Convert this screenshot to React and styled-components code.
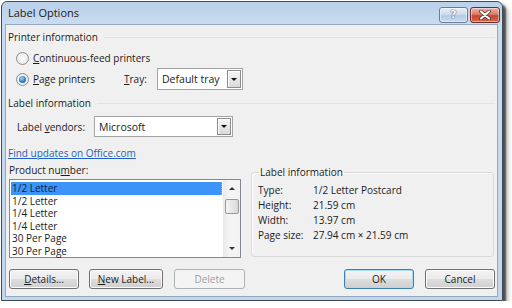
import React from 'react';
import styled, {createGlobalStyle} from 'styled-components';

const GlobalStyle = createGlobalStyle`
  html, body {
    margin: 0;
    padding: 0;
    background: #fff;
  }
  body {
    font-family: "Open Sans", "Noto Sans", sans-serif;
    font-size: 10px;
    color: #1b1b1b;
  }
  * {
    box-sizing: border-box;
  }
`;

const Window = styled.div`
  margin: 1px 0 0 1px;
  width: 502px;
  height: 300px;
  border: 1px solid #414b57;
  border-radius: 6px 6px 0 0;
  background: linear-gradient(180deg, #b9d0ea 0px, #cadcef 22px, #c2d6ec 100%);
  padding: 0 4px 3px 3px;
  display: flex;
  flex-direction: column;
  box-shadow: 3px 3px 2px rgba(0, 0, 0, 0.6), 5px 5px 5px rgba(0, 0, 0, 0.25);
`;

const TitleBar = styled.div`
  height: 22px;
  margin-right: -2px;
  display: flex;
  align-items: center;
  padding-left: 3px;
`;

const Title = styled.div`
  flex: 1;
  font-size: 11px;
  color: #1a1a1a;
  margin-top: -1px;
`;

const CaptionButton = styled.div`
  width: ${p => p.$w}px;
  height: 16px;
  margin-left: ${p => p.$gap}px;
  margin-top: 3px;
  border: 1px solid ${p => (p.$close ? '#6e2e25' : '#6a7d95')};
  border-radius: 3px;
  background: ${p =>
    p.$close
      ? 'linear-gradient(180deg, #ecb2a6 0%, #dc7e6b 45%, #c8462f 55%, #d4674f 100%)'
      : 'linear-gradient(180deg, #e6eff8 0%, #ccdcee 45%, #b5cbe4 55%, #c8daee 100%)'};
  box-shadow: inset 0 0 0 1px rgba(255, 255, 255, 0.45);
  display: flex;
  align-items: center;
  justify-content: center;
  color: #fff;
  font-family: "DejaVu Sans", sans-serif;
  font-weight: bold;
  font-size: 11px;
  text-shadow: 0 0 1px #3c4654, 0 0 1px #3c4654;
`;

const Body = styled.div`
  flex: 1;
  background: #f0f0f0;
  border: 1px solid #94a9c1;
  padding: 5px 2px 0 3px;
  display: flex;
  flex-direction: column;
`;

const SectionHeader = styled.div`
  display: flex;
  align-items: center;
  gap: 6px;
  height: 14px;
  margin-top: ${p => p.$top}px;
  margin-left: -1px;
  &::after {
    content: '';
    flex: 1;
    height: 1px;
    background: #dde4e9;
  }
`;

const Row = styled.div`
  display: flex;
  align-items: center;
  height: ${p => p.$h}px;
  margin-top: ${p => p.$top}px;
  padding-left: ${p => p.$indent || 0}px;
`;

const RadioLabel = styled.label`
  display: flex;
  align-items: center;
  gap: 4px;
  width: ${p => p.$w || 'auto'};
`;

const RadioDot = styled.span`
  width: 13px;
  height: 13px;
  border-radius: 50%;
  border: 1px solid #8a8c8e;
  background: radial-gradient(circle at 50% 50%, #fbfbfb 0%, #e4e4e4 100%);
  display: flex;
  align-items: center;
  justify-content: center;
  &::after {
    content: '';
    display: ${p => (p.$on ? 'block' : 'none')};
    width: 7px;
    height: 7px;
    border-radius: 50%;
    background: radial-gradient(circle at 40% 35%, #a9d6f7 0%, #3a86c4 50%, #1c4f80 100%);
  }
`;

const FieldLabel = styled.span`
  width: ${p => p.$w}px;
`;

const Combo = styled.div`
  width: ${p => p.$w}px;
  height: ${p => p.$h}px;
  border: 1px solid #a3a3a3;
  background: #fff;
  display: flex;
  align-items: center;
  padding: 1px 1px 1px 4px;
`;

const ComboText = styled.span`
  flex: 1;
  font-size: 10.5px;
`;

const ComboButton = styled.span`
  width: 14px;
  height: 100%;
  border: 1px solid #8c8c8c;
  background: linear-gradient(180deg, #f4f4f4 0%, #dadada 100%);
  box-shadow: inset 1px 1px 0 #fff;
  display: flex;
  align-items: center;
  justify-content: center;
  &::after {
    content: '';
    border-left: 3px solid transparent;
    border-right: 3px solid transparent;
    border-top: 3px solid #111;
  }
`;

const Link = styled.a`
  display: block;
  height: 14px;
  margin-top: 9px;
  margin-left: -1px;
  color: #1f5fbf;
  text-decoration: underline;
`;

const Lower = styled.div`
  display: flex;
  gap: 10px;
  margin-top: 3px;
`;

const LeftCol = styled.div`
  width: 232px;
  display: flex;
  flex-direction: column;
`;

const ListBox = styled.div`
  margin-top: 2px;
  height: 79px;
  border: 1px solid #838790;
  background: #fff;
  display: flex;
  padding: 1px 0 0 1px;
`;

const Items = styled.div`
  flex: 1;
  padding-top: 1px;
  margin-right: 1px;
`;

const Item = styled.div`
  height: 12.5px;
  line-height: 12.5px;
  padding-left: 1px;
  color: ${p => (p.$sel ? '#0c1d45' : '#1b1b1b')};
  background: ${p => (p.$sel ? '#3c94f8' : 'transparent')};
  border-right: 1px dotted ${p => (p.$sel ? '#f0a548' : 'transparent')};
`;

const ScrollBar = styled.div`
  width: 17px;
  margin-top: -1px;
  background: linear-gradient(90deg, #e9e9e9 0%, #f5f5f5 40%, #f2f2f2 100%);
  display: flex;
  flex-direction: column;
  align-items: center;
`;

const ScrollArrow = styled.div`
  height: 17px;
  width: 100%;
  display: flex;
  align-items: center;
  justify-content: center;
  &::after {
    content: '';
    border-left: 3px solid transparent;
    border-right: 3px solid transparent;
    ${p => (p.$up ? 'border-bottom: 3px solid #333;' : 'border-top: 3px solid #333;')}
  }
`;

const Thumb = styled.div`
  width: 14px;
  height: 15px;
  margin-top: 2px;
  border: 1px solid #979797;
  border-radius: 2px;
  background: linear-gradient(90deg, #f5f5f5 0%, #e6e6e6 50%, #d9d9d9 100%);
`;

const Track = styled.div`
  flex: 1;
`;

const InfoBox = styled.fieldset`
  width: 243px;
  margin: 2px 0 0 0;
  padding: 3px 0 0 6px;
  height: 92px;
  border: 1px solid #d9d9d9;
  border-radius: 3px;
  box-shadow: inset 1px 1px 0 #fff;
  display: grid;
  grid-template-columns: 55px 1fr;
  grid-auto-rows: 15px;
  align-content: start;
  align-items: center;
`;

const Legend = styled.legend`
  padding: 0 1px;
  margin-left: 1px;
  color: #1b1b1b;
`;

const Buttons = styled.div`
  display: flex;
  margin-top: 11px;
  height: 20px;
`;

const Button = styled.button`
  width: ${p => p.$w}px;
  height: 20px;
  margin-left: ${p => p.$gap || 0}px;
  margin-right: ${p => (p.$push ? 'auto' : '0')};
  font-family: inherit;
  font-size: 10px;
  padding: 0;
  border-radius: 3px;
  border: 1px solid ${p => (p.$default ? '#3c7fb1' : p.disabled ? '#adb2b5' : '#707070')};
  color: ${p => (p.disabled ? '#a0a0a0' : '#1b1b1b')};
  background: ${p =>
    p.disabled
      ? '#f4f4f4'
      : 'linear-gradient(180deg, #f3f3f3 0%, #ebebeb 48%, #dddddd 52%, #cfcfcf 100%)'};
  box-shadow: inset 0 0 0 1px ${p => (p.$default ? '#a6dcf6' : p.disabled ? '#f4f4f4' : '#fcfcfc')};
`;

const products = ['1/2 Letter', '1/2 Letter', '1/4 Letter', '1/4 Letter', '30 Per Page', '30 Per Page'];

const info = [
  ['Type:', '1/2 Letter Postcard'],
  ['Height:', '21.59 cm'],
  ['Width:', '13.97 cm'],
  ['Page size:', '27.94 cm × 21.59 cm'],
];

export default function App() {
  return (
    <>
      <GlobalStyle/>
      <Window>
        <TitleBar>
          <Title>Label Options</Title>
          <CaptionButton $w={29} $gap={0}>?</CaptionButton>
          <CaptionButton $w={30} $gap={2} $close>
            <svg width="12" height="10" viewBox="0 0 12 10">
              <path d="M2 1.5 L10 8.5 M10 1.5 L2 8.5" stroke="#4a2a26" strokeWidth="3.6" strokeLinecap="round"/>
              <path d="M2 1.5 L10 8.5 M10 1.5 L2 8.5" stroke="#fff" strokeWidth="2.2" strokeLinecap="round"/>
            </svg>
          </CaptionButton>
        </TitleBar>
        <Body>
          <SectionHeader $top={0}>Printer information</SectionHeader>
          <Row $h={14} $top={7} $indent={7}>
            <RadioLabel>
              <RadioDot/>
              <span><u>C</u>ontinuous-feed printers</span>
            </RadioLabel>
          </Row>
          <Row $h={22} $top={3} $indent={7}>
            <RadioLabel $w="108px">
              <RadioDot $on/>
              <span><u>P</u>age printers</span>
            </RadioLabel>
            <FieldLabel $w={33}><u>T</u>ray:</FieldLabel>
            <Combo $w={86} $h={22}>
              <ComboText>Default tray</ComboText>
              <ComboButton/>
            </Combo>
          </Row>
          <SectionHeader $top={6}>Label information</SectionHeader>
          <Row $h={21} $top={6} $indent={8}>
            <FieldLabel $w={77}>Label <u>v</u>endors:</FieldLabel>
            <Combo $w={139} $h={21}>
              <ComboText>Microsoft</ComboText>
              <ComboButton/>
            </Combo>
          </Row>
          <Link>Find updates on Office.com</Link>
          <Lower>
            <LeftCol>
              <FieldLabel $w={232}>Product nu<u>m</u>ber:</FieldLabel>
              <ListBox>
                <Items>
                  {products.map((p, i) => (
                    <Item key={i} $sel={i === 0}>{p}</Item>
                  ))}
                </Items>
                <ScrollBar>
                  <ScrollArrow $up/>
                  <Thumb/>
                  <Track/>
                  <ScrollArrow/>
                </ScrollBar>
              </ListBox>
            </LeftCol>
            <InfoBox>
              <Legend>Label information</Legend>
              {info.map(([k, v]) => (
                <React.Fragment key={k}>
                  <span>{k}</span>
                  <span>{v}</span>
                </React.Fragment>
              ))}
            </InfoBox>
          </Lower>
          <Buttons>
            <Button $w={70}><u>D</u>etails...</Button>
            <Button $w={74} $gap={10}><u>N</u>ew Label...</Button>
            <Button $w={71} $gap={11} $push disabled>Delete</Button>
            <Button $w={70} $default>OK</Button>
            <Button $w={70} $gap={11}>Cancel</Button>
          </Buttons>
        </Body>
      </Window>
    </>
  );
}
